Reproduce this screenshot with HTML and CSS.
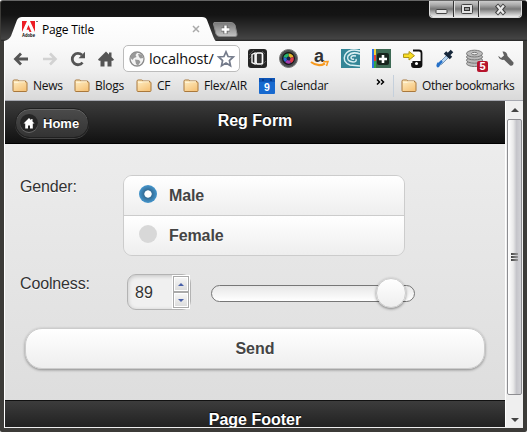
FILE: index.html
```html
<!DOCTYPE html>
<html lang="en">
<head>
<meta charset="utf-8">
<title>Page Title</title>
<link rel="stylesheet" href="styles.css">
</head>
<body>
<svg width="0" height="0" class="defs">
  <defs>
    <linearGradient id="gFolder" x1="0" y1="0" x2="0.6" y2="1"><stop offset="0" stop-color="#fff0c8"/><stop offset="1" stop-color="#f6c57c"/></linearGradient>
    <linearGradient id="gTab" x1="0" y1="0" x2="0" y2="1"><stop offset="0" stop-color="#fff"/><stop offset="1" stop-color="#fafafa"/></linearGradient>
    <linearGradient id="gNew" x1="0" y1="0" x2="0" y2="1"><stop offset="0" stop-color="#777"/><stop offset="1" stop-color="#c5c5c5"/></linearGradient>
    <symbol id="folder" viewBox="0 0 16 14"><path d="M1 3V2.2Q1 1 2.2 1H5.5Q6.4 1 6.7 2H13.5V3H14.2Q15 3 15 4V11.5Q15 12.5 14 12.5H2Q1 12.5 1 11.5Z" fill="url(#gFolder)" stroke="#a9783c"/><path d="M2 3.5H6L7 2.8H13" fill="none" stroke="#fff3d5"/></symbol>
  </defs>
</svg>
<div class="window">
  <div class="titlebar">
    <div class="tab">
      <svg class="tab-shape" width="212" height="25" viewBox="0 0 212 25"><path d="M0 25V24Q5 23 7 19L13 3Q14.500 0 18 0H198Q202 0 203 3L209 19Q211 24 212 24V25Z" fill="url(#gTab)"/></svg>
      <svg class="adobe" width="17" height="17" viewBox="0 0 17 17"><path d="M0 0H5L0 11ZM8 0H13V11ZM6.500 4L9.500 11H7.500L6.600 8.700H4.500Z" fill="#ed1c24"/><path d="M14 .5h2" stroke="#777"/><text x="0" y="16.300" font-family="Liberation Sans" font-weight="700" font-size="5" textLength="13" lengthAdjust="spacingAndGlyphs">Adobe</text></svg>
      <span class="tab-title">Page Title</span>
      <svg class="tab-close" width="8" height="8" viewBox="0 0 8 8"><path d="M1 1L7 7M7 1L1 7" stroke="#aaa" stroke-width="1.500"/></svg>
    </div>
    <svg class="newtab" width="25" height="15" viewBox="0 0 25 15"><path d="M1 .5H18Q21 .5 22 3L24 12Q24.500 14.500 22 14.500H7Q4 14.500 3 12L.5 2Z" fill="url(#gNew)" stroke="#888"/><path d="M12.500 3.200V11.800M8.200 7.500H16.800" stroke="#666" stroke-width="4.200"/><path d="M12.500 3.500V11.500M8.500 7.500H16.500" stroke="#fff" stroke-width="2.400"/></svg>
    <div class="controls">
      <span class="ctl"><svg width="13" height="7" viewBox="0 0 13 7"><rect x="1" y="1.500" width="11" height="4" rx="1" fill="#e5e5e5" stroke="#444"/></svg></span>
      <span class="ctl"><svg width="12" height="10" viewBox="0 0 12 10"><rect x=".5" y=".5" width="11" height="9" rx="1" fill="#e2e2e2" stroke="#444"/><rect x="3.500" y="3.500" width="5" height="3" fill="#999" stroke="#333"/></svg></span>
      <span class="ctl close"><svg width="13" height="11" viewBox="0 0 13 11"><path d="M2.500 1L10.500 10M10.500 1L2.500 10" stroke="#444" stroke-width="4.200"/><path d="M3.200 1.500L9.800 9.500M9.800 1.500L3.200 9.500" stroke="#e8e8e8" stroke-width="2.300"/></svg></span>
    </div>
  </div>
  <div class="frame">
    <div class="chrome">
      <div class="toolbar">
        <svg class="nav" width="16" height="16" viewBox="0 0 16 16"><path d="M15 8H3M8 2.500L2.500 8L8 13.500" fill="none" stroke="#555" stroke-width="2.800"/></svg>
        <svg class="nav fwd" width="16" height="16" viewBox="0 0 16 16"><path d="M1 8H13M8 2.500L13.500 8L8 13.500" fill="none" stroke="#d2d2d2" stroke-width="2.600"/></svg>
        <svg class="nav reload" width="16" height="16" viewBox="0 0 16 16"><path d="M12.500 11.500A5.700 5.700 0 1 1 12 4" fill="none" stroke="#555" stroke-width="2.800"/><path d="M15 .8V7.200H8.500Z" fill="#555"/></svg>
        <svg class="nav home" width="16" height="16" viewBox="0 0 16 16"><path d="M8 .5L0 8.500L1 9.800H2.500V15.500H6.500V10.500H9.500V15.500H13.500V9.800H15L16 8.500L13.500 6V1.500H11V3.500Z" fill="#555"/></svg>
        <div class="omnibox">
          <svg width="16" height="16" viewBox="0 0 16 16"><circle cx="8" cy="8" r="7" fill="#f3f3f3" stroke="#8b8b8b" stroke-width="1.300"/><path d="M2 4L5 1.500L8 2L6.500 4L7.500 6L5 7L3.500 9L1.500 7ZM9 3L13 3.500L14.300 7L11.500 7.500L10 6ZM6 8.500L10 9L11.500 11L9 14.500L7 13Z" fill="#999"/></svg>
          <span class="url">localhost/</span>
          <svg class="star" width="18" height="18" viewBox="0 0 18 18"><path d="M9 1.800L11.100 6.500L16.300 7L12.400 10.500L13.500 15.800L9 13L4.500 15.800L5.600 10.500L1.700 7L6.900 6.500Z" fill="#fff" stroke="#747b8b" stroke-width="1.700"/></svg>
        </div>
        <div class="exts">
          <svg width="19" height="19" viewBox="0 0 19 19"><rect width="19" height="19" rx="3" fill="#252525"/><path d="M1 6L6 1M1 10L4 7M13 17L18 12M14 2L17 5" stroke="#555"/><path d="M4 5.500L7 4V15L4 13.500Z" fill="none" stroke="#fff" stroke-width="1.300"/><rect x="8" y="4" width="6.500" height="11" rx="1.500" fill="#333" stroke="#fff" stroke-width="1.700"/></svg>
          <svg width="19" height="19" viewBox="0 0 19 19"><circle cx="9.500" cy="9.500" r="9" fill="#4a4e50" stroke="#777"/><circle cx="9.500" cy="9.500" r="6.500" fill="#151515"/><path d="M9.500 9.500V4.500A5 5 0 0 1 14.500 8Z" fill="#e2b52c"/><path d="M9.500 9.500L14.500 8A5 5 0 0 1 12 14Z" fill="#df3d4f"/><path d="M9.500 9.500L12 14A5 5 0 0 1 6 13Z" fill="#a23cb0"/><path d="M9.500 9.500L6 13A5 5 0 0 1 4.500 8Z" fill="#2b6bd3"/><path d="M9.500 9.500L4.500 8A5 5 0 0 1 9.500 4.500Z" fill="#25b56c"/><circle cx="9.500" cy="9.500" r="2" fill="#182448"/></svg>
          <svg width="19" height="19" viewBox="0 0 19 19"><text x="4" y="12.500" font-family="Liberation Sans" font-size="18" font-weight="700" fill="#333">a</text><path d="M1 13Q8 18.500 15 14.500" fill="none" stroke="#f79a20" stroke-width="2.200"/><path d="M13 12.800L18 12.500L16.500 17" fill="none" stroke="#f79a20" stroke-width="1.500"/></svg>
          <svg width="19" height="19" viewBox="0 0 19 19"><rect width="19" height="19" fill="#348697"/><path d="M19 2Q8-1 4 6Q1 13 9 16L19 17M19 5Q11 2 7 7Q5 12 12 13Q16 13 15 10M15 7Q10 6 10 9Q11 11 13 10" fill="none" stroke="#d9eff2" stroke-width="1.500"/></svg>
          <svg width="19" height="19" viewBox="0 0 19 19"><rect width="19" height="19" fill="#3e6a55"/><path d="M0 0H2V19H0Z" fill="#2f72e8"/><path d="M2 0H4V6H2Z" fill="#f4d13a"/><path d="M2 6H4V12H2Z" fill="#e34230"/><path d="M2 12H4V19H2Z" fill="#31a44a"/><rect x="5" y="4" width="12" height="12" rx="2" fill="#17241d"/><path d="M11 6V14M7 10H15" stroke="#fff" stroke-width="2.600"/></svg>
          <svg width="20" height="19" viewBox="0 0 20 19"><path d="M10 1.500H16Q18.500 1.500 18.500 4V16Q18.500 18 16 18H11Q9 18 9 16V14" fill="#fff" stroke="#111" stroke-width="1.800"/><path d="M10 3V12H17V3" fill="#fff"/><path d="M9.500 12H18.500V16.500L16 18H11L9 16Z" fill="#111"/><circle cx="13.500" cy="14.500" r="1.500" fill="#fff"/><path d="M.5 5H6V2.500L11.500 6.700L6 11V8.500H.5Z" fill="#f8dd25" stroke="#ad951a"/></svg>
          <svg width="19" height="19" viewBox="0 0 19 19"><path d="M13 5L5 13L3 17L7 15L15 7Z" fill="#b9d6f0" stroke="#7896b5"/><path d="M7 12L3 16" stroke="#2772ca" stroke-width="2.500"/><path d="M10 3.500L16 9M13 6L17 2" stroke="#17283b" stroke-width="3.600"/><path d="M3 13Q0 17 2.500 18.500Q5 18 4.500 16Z" fill="#2570c8"/></svg>
          <svg class="discs" width="22" height="23" viewBox="0 0 22 23"><g fill="#bbb" stroke="#777"><ellipse cx="8.500" cy="14.500" rx="8" ry="3"/><ellipse cx="8.500" cy="11.200" rx="8" ry="3"/><ellipse cx="8.500" cy="7.900" rx="8" ry="3"/><ellipse cx="8.500" cy="4.600" rx="8" ry="3.400"/></g><ellipse cx="8.500" cy="4.600" rx="3" ry="1.200" fill="#eee" stroke="#777"/><rect x="11" y="12" width="11" height="11" rx="2" fill="#b6142c"/><text x="13.500" y="21.300" font-family="Liberation Sans" font-size="11" font-weight="700" fill="#fff">5</text></svg>
          <svg class="wrench" width="18" height="18" viewBox="0 0 18 18"><path d="M5.500 1.500Q10 1 10.500 6L16.500 12.500Q17 16.500 13 15.500L7 9.800Q2 10.500 1.300 5.800L4 8L7 5.500Z" fill="#606060"/></svg>
        </div>
      </div>
      <div class="bookmarks">
        <span class="bm b1"><svg width="16" height="14"><use href="#folder"/></svg><span>News</span></span>
        <span class="bm b2"><svg width="16" height="14"><use href="#folder"/></svg><span>Blogs</span></span>
        <span class="bm b3"><svg width="16" height="14"><use href="#folder"/></svg><span>CF</span></span>
        <span class="bm b4"><svg width="16" height="14"><use href="#folder"/></svg><span>Flex/AIR</span></span>
        <span class="bm b5"><svg width="16" height="16" viewBox="0 0 16 16"><rect width="16" height="16" rx="1" fill="#1769cf"/><path d="M0 0H16V4H0Z" fill="#0d54b5"/><path d="M3 2H5M11 2H13" stroke="#083b8c" stroke-width="2"/><text x="5" y="12.500" font-family="Liberation Sans" font-size="10.500" font-weight="700" fill="#fff">9</text></svg><span>Calendar</span></span>
        <svg class="more" width="9" height="6" viewBox="0 0 9 6"><path d="M1 .5L3.500 3L1 5.500M5 .5L7.500 3L5 5.500" fill="none" stroke="#000" stroke-width="1.500"/></svg>
        <span class="bm other"><svg width="16" height="14"><use href="#folder"/></svg><span>Other bookmarks</span></span>
      </div>
    </div>
    <div class="viewport">
      <div class="page">
        <header class="bar header">
          <a class="homebtn"><span class="disc"><svg width="12" height="11" viewBox="0 0 12 11"><path d="M6 0L.5 5.500H2.200V10.500H5V7.500H7V10.500H9.800V5.500H11.500L9.500 3.500V1H8.200V2.200Z" fill="#fff"/></svg></span><span>Home</span></a>
          <h1>Reg Form</h1>
        </header>
        <main>
          <div class="field gender">
            <label>Gender:</label>
            <div class="group">
              <div class="option"><span class="radio on"></span><span>Male</span></div>
              <div class="option"><span class="radio"></span><span>Female</span></div>
            </div>
          </div>
          <div class="field cool">
            <label>Coolness:</label>
            <div class="number"><span>89</span><div class="spin"><i class="up"></i><i class="down"></i></div></div>
            <div class="track"><div class="knob"></div></div>
          </div>
          <div class="send">Send</div>
        </main>
        <footer class="bar footer"><h1>Page Footer</h1></footer>
      </div>
      <div class="scroll">
        <i class="arrow aup"></i>
        <div class="thumb"><i></i><i></i><i></i></div>
        <i class="arrow adown"></i>
      </div>
    </div>
  </div>
</div>
</body>
</html>
```

FILE: styles.css
```css
* { box-sizing: border-box; }
body { margin: 0; overflow: hidden; background: #fff; }
svg { display: block; flex: none; overflow: visible; }
.defs { position: absolute; }
.window { width: 527px; height: 432px; background: #3c3b38; border-radius: 3px 3px 2px 2px; overflow: hidden; border-left: 1px solid #3c3b38; border-top: 1px solid #666; font: 12px "Open Sans", "Noto Sans", sans-serif; color: #111; }
.titlebar { display: flex; height: 40px; background: linear-gradient(#111 0, #141414 35%, #444 95%, #222 100%); }
.tab { position: relative; display: flex; width: 208px; height: 24px; margin: 16px 0 0 3px; align-items: center; }
.tab-shape { position: absolute; left: 0; top: 0; }
.adobe { position: relative; margin: 1px 0 0 18px; }
.tab-title { position: relative; margin-left: 3px; width: 54px; white-space: nowrap; font-size: 12px; letter-spacing: -.2px; color: #000; }
.tab-close { position: relative; margin-left: 96px; }
.newtab { margin: 21px 0 0 1px; }
.controls { display: flex; height: 17px; margin-left: auto; margin-right: 5px; border: 1px solid #ddd; border-top: 0; border-radius: 0 0 4px 4px; overflow: hidden; }
.ctl { display: flex; width: 24px; align-items: center; justify-content: center; background: linear-gradient(#ccc 0, #aaa 25%, #777 50%, #aaa 70%, #eee 100%); border-right: 1px solid #333; }
.ctl:first-child svg { margin-top: 5px; }
.ctl + .ctl { border-left: 1px solid #ddd; width: 25px; }
.ctl.close { width: 42px; border-right: 0; }
.frame { margin: 0 4px 0 3px; width: 519px; height: 387px; border-left: 1px solid #fff; border-bottom: 1px solid #eee; background: #fafafa; }
.chrome { height: 60px; background: linear-gradient(#fbfbfb, #f1f1f1 45%, #d9d9d9); border-bottom: 1px solid #a6a8b0; border-top-right-radius: 2px; }
.toolbar { display: flex; height: 35px; padding: 4px 0 4px 8px; align-items: center; }
.nav { margin-top: 1px; }
.fwd { margin-left: 13px; }
.reload { margin-left: 12px; }
.home { margin-left: 12px; }
.omnibox { display: flex; align-items: center; width: 117px; height: 27px; margin-left: 9px; padding: 0 3px 0 5px; border: 1px solid #bcbcbc; border-radius: 5px; background: #fff; }
.url { margin-left: 4px; width: 66px; white-space: nowrap; font-size: 14.500px; letter-spacing: -.15px; line-height: 22px; }
.star { margin-left: 2px; }
.exts { display: flex; align-items: center; gap: 12px; margin-left: 8px; }
.discs { margin: 4px -2px 0 0; }
.wrench { margin-left: -1px; }
.bookmarks { display: flex; height: 20px; align-items: center; padding-left: 7px; white-space: nowrap; }
.bm { display: flex; align-items: center; gap: 5px; height: 20px; line-height: 20px; letter-spacing: -.25px; }
.b1 { width: 62px; }
.b2 { width: 62px; }
.b3 { width: 47px; }
.b4 { width: 76px; }
.b5 { width: 117px; }
.more { margin-top: -8px; width: 9px; }
.other { height: 22px; margin-left: 8px; padding-left: 7px; border-left: 1px solid #c5d0dc; letter-spacing: -.42px; }
.viewport { display: flex; height: 326px; }
.page { display: flex; flex-direction: column; width: 500px; height: 326px; overflow: hidden; background: linear-gradient(#efefef, #dcdcdc); font-family: "Liberation Sans", Arial, sans-serif; font-size: 16px; color: #333; text-shadow: 0 1px 0 #fff; }
.bar { display: grid; background: linear-gradient(#3c3c3c, #111); color: #fff; text-shadow: 0 -1px 1px #000; }
.bar h1 { grid-area: 1 / 1; margin: 0; text-align: center; font-size: 16px; line-height: 20px; }
.header { height: 43px; border-bottom: 1px solid #000; flex: none; }
.header h1 { padding-top: 10px; }
.homebtn { grid-area: 1 / 1; display: flex; align-items: center; width: 74px; height: 30px; margin: 7px 0 0 10px; padding-left: 4px; gap: 5px; border: 1px solid #202020; border-radius: 15px; background: linear-gradient(#4b4b4b, #333); box-shadow: inset 0 1px 0 #666, 0 1px 0 #444; font-size: 13px; font-weight: 700; }
.disc { display: flex; width: 18px; height: 18px; align-items: center; justify-content: center; border-radius: 50%; background: #252525; box-shadow: 0 1px 0 #666; }
main { height: 256px; flex: none; padding: 31px 0 0 15px; }
.field { display: flex; }
.field label { width: 103px; line-height: 20px; letter-spacing: -.15px; }
.gender { height: 99px; }
.gender label { padding-top: 2px; }
.group { width: 282px; height: 81px; border: 1px solid #ccc; border-radius: 9px; overflow: hidden; }
.option { display: flex; height: 39px; align-items: center; gap: 12px; padding-left: 15px; background: linear-gradient(#fff, #eee); font-weight: 700; color: #444; letter-spacing: -.1px; }
.option + .option { height: 40px; border-top: 1px solid #ccc; }
.radio { width: 18px; height: 18px; margin-top: -3px; border-radius: 50%; background: #d8d8d8; }
.radio.on { background: radial-gradient(circle, #fff 3.300px, #356e97 4px, #4596cd 9px); }
.cool label { width: 107px; }
.number { display: flex; width: 64px; height: 36px; padding: 1px 1px 1px 7px; border: 1px solid #b3b3b3; border-radius: 9px; background: #f0f0f0; box-shadow: inset 0 1px 4px rgba(0,0,0,.2); line-height: 34px; justify-content: space-between; }
.spin { width: 16px; height: 32px; border: 1px solid #aaa; outline: 1px solid #fff; background: #aaa; }
.spin i { display: flex; width: 14px; height: 14px; align-items: center; justify-content: center; border: 1px solid #fff; background: linear-gradient(#f5f5f5, #ddd); }
.spin .down { margin-top: 2px; }
.spin i::after { content: ""; border: 3px solid transparent; border-top-width: 0; border-bottom-color: #4960a8; }
.spin .down::after { border-top: 3px solid #4960a8; border-bottom: 0; }
.track { width: 204px; height: 17px; margin: 11px 0 0 20px; border: 1px solid #777; border-radius: 9px; background: linear-gradient(#e7e7e7, #fff); padding-left: 164px; }
.knob { width: 30px; height: 30px; margin-top: -8px; border: 1px solid #ccc; border-radius: 50%; background: linear-gradient(#fff, #eee); box-shadow: 0 1px 3px rgba(0,0,0,.45); }
.send { width: 460px; height: 41px; margin: 18px 0 0 5px; border: 1px solid #ccc; border-radius: 17px; background: linear-gradient(#fff, #eee); box-shadow: 0 1px 3px rgba(0,0,0,.4); text-align: center; line-height: 39px; font-weight: 700; color: #444; }
.footer { height: 43px; flex: none; border-top: 1px solid #111; }
.footer h1 { padding-top: 9px; }
.scroll { display: flex; flex-direction: column; align-items: center; width: 18px; border-left: 1px solid #fff; background: #efefef; }
.arrow { width: 0; height: 0; border: 4px solid transparent; }
.aup { margin-top: 7px; border-top: 0; border-bottom-color: #444; }
.thumb { display: flex; flex-direction: column; align-items: center; justify-content: center; gap: 1px; margin-top: 7px; width: 15px; height: 276px; border: 1px solid #8d8d91; border-radius: 2px; background: linear-gradient(90deg, #fff, #eaeaea 40%, #c5c5ca 65%, #d2d2d6); }
.thumb i { width: 7px; height: 2px; background: linear-gradient(90deg, #444, #999); }
.adown { margin-top: 23px; border-bottom: 0; border-top-color: #444; }
```
